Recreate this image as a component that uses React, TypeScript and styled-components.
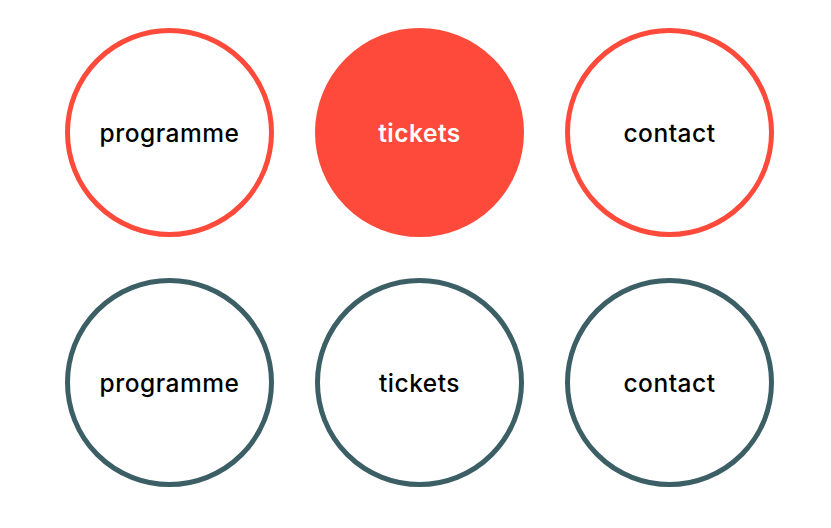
import React from "react";
import styled, { createGlobalStyle } from "styled-components";

const GlobalStyle = createGlobalStyle`
    body {
        margin: 0;
        background: #ffffff;
        font-family: "Inter", "Noto Sans", sans-serif;
    }
`;

const Page = styled.div`
    padding: 28px 0 0 65px;
    display: flex;
    flex-direction: column;
    gap: 41px;
`;

const Row = styled.nav`
    display: flex;
    gap: 41px;
`;

const Circle = styled.a<{ $color: string; $filled?: boolean }>`
    box-sizing: border-box;
    width: 209px;
    height: 209px;
    border-radius: 50%;
    border: 5px solid ${p => p.$color};
    background: ${p => (p.$filled ? p.$color : "transparent")};
    color: ${p => (p.$filled ? "#ffffff" : "#000000")};
    display: flex;
    align-items: center;
    justify-content: center;
    font-size: 24.5px;
    font-weight: ${p => (p.$filled ? 600 : 500)};
    letter-spacing: 0.5px;
    text-decoration: none;
    padding-top: 1px;
`;

const RED = "#fe4a3a";
const TEAL = "#3c5f66";

const links = ["programme", "tickets", "contact"];

const App: React.FC = () => {
    return (
        <>
            <GlobalStyle />
            <Page>
                <Row>
                    {links.map(l => (
                        <Circle key={l} href="#" $color={RED} $filled={l === "tickets"}>{l}</Circle>
                    ))}
                </Row>
                <Row>
                    {links.map(l => (
                        <Circle key={l} href="#" $color={TEAL}>{l}</Circle>
                    ))}
                </Row>
            </Page>
        </>
    );
};

export default App;
